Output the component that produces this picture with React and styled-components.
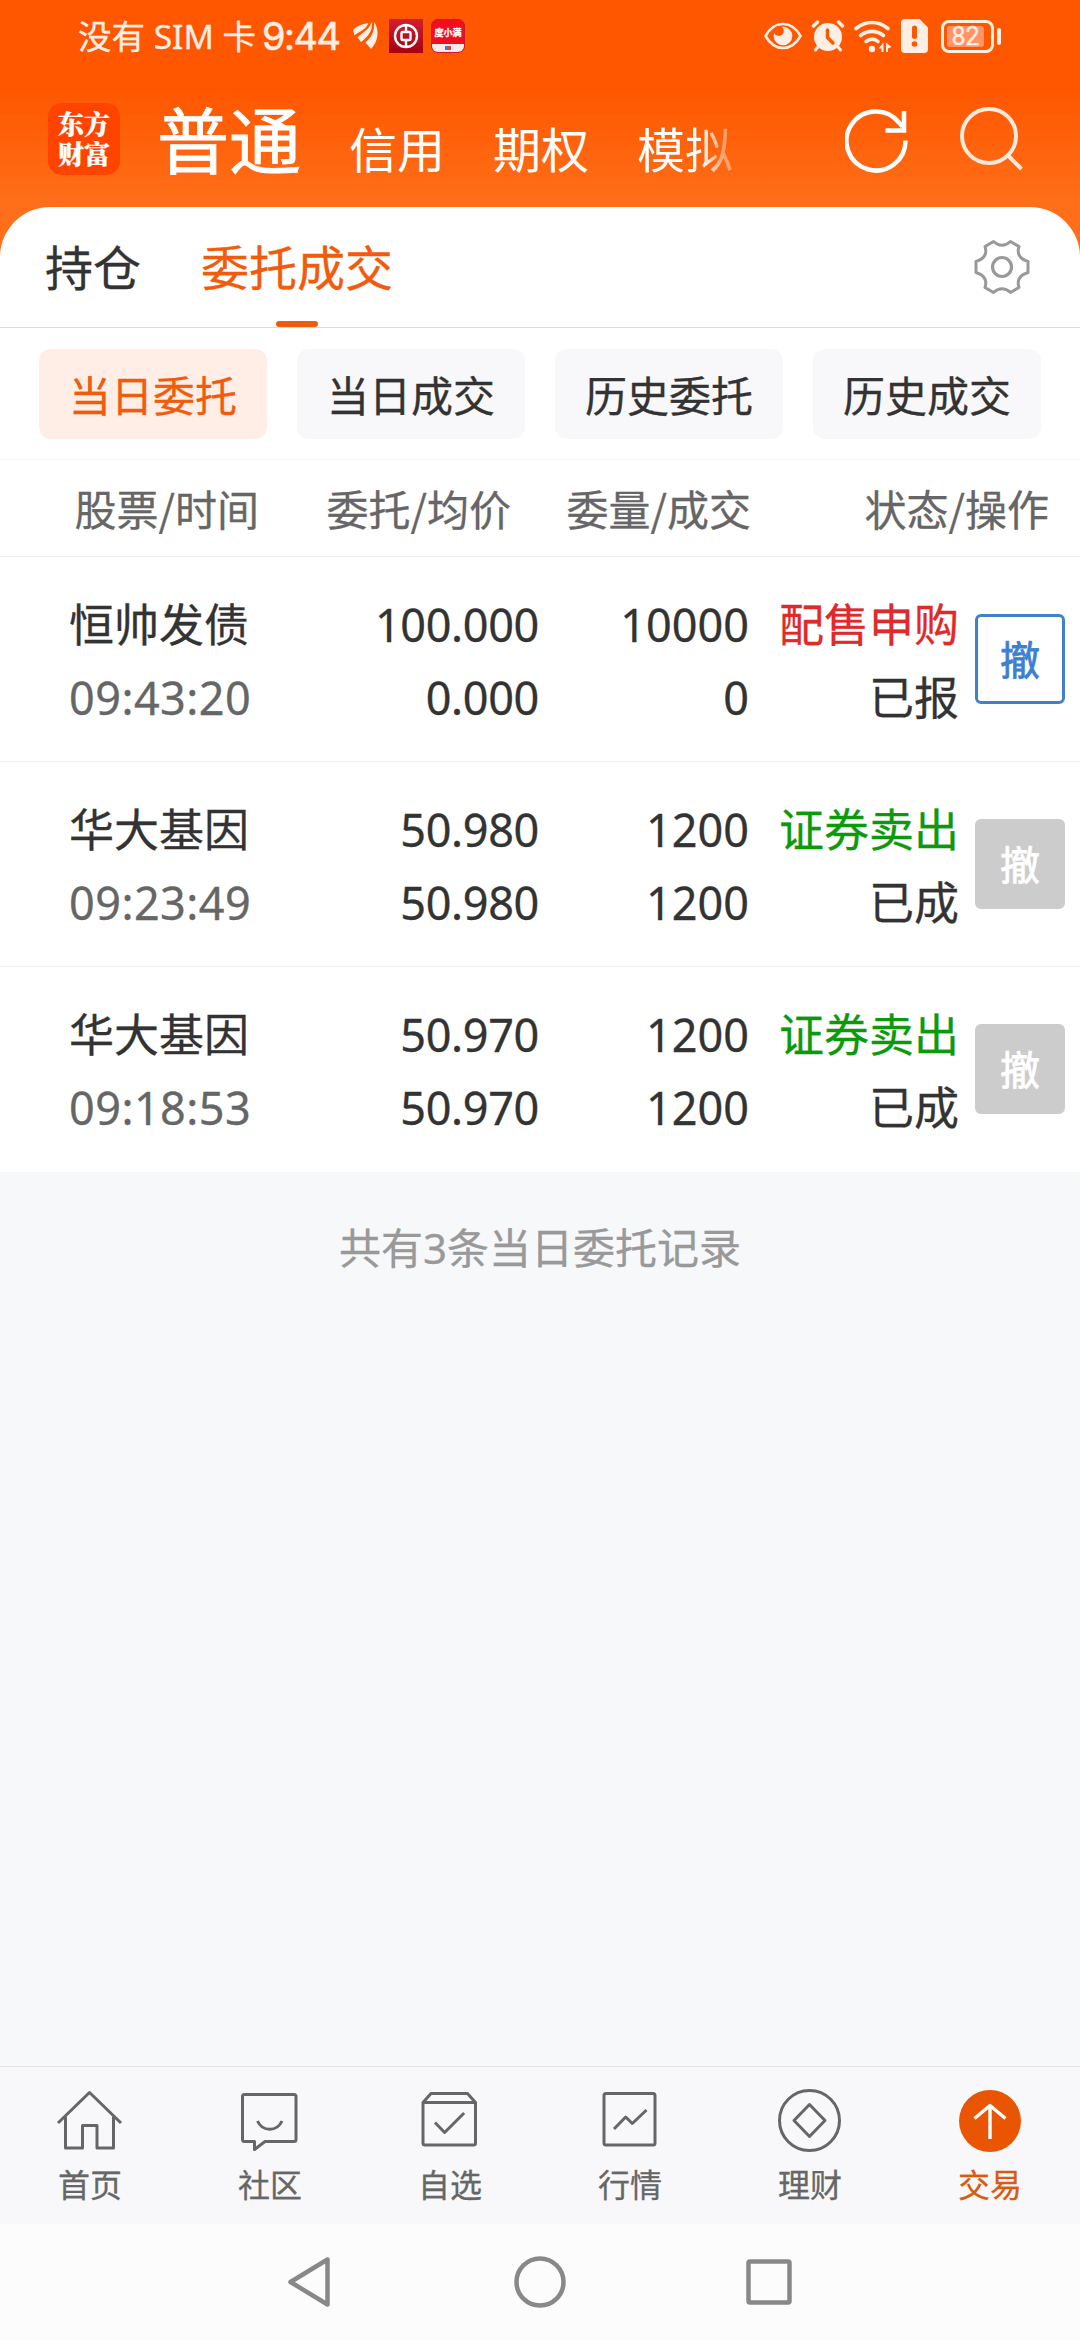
import React from "react"
import styled, { createGlobalStyle } from "styled-components"

const GlobalStyle = createGlobalStyle`
  * {
    box-sizing: border-box;
  }
  body {
    margin: 0;
    background: #f7f8fa;
    color: #333;
    font-family: "Noto Sans", "Noto Sans CJK SC", sans-serif;
  }
`

const ORDERS = [
  {
    name: "恒帅发债",
    time: "09:43:20",
    price: "100.000",
    average: "0.000",
    amount: "10000",
    filled: "0",
    side: "配售申购",
    color: "#e02a2a",
    status: "已报",
    cancelable: true,
  },
  {
    name: "华大基因",
    time: "09:23:49",
    price: "50.980",
    average: "50.980",
    amount: "1200",
    filled: "1200",
    side: "证券卖出",
    color: "#0c9a0c",
    status: "已成",
  },
  {
    name: "华大基因",
    time: "09:18:53",
    price: "50.970",
    average: "50.970",
    amount: "1200",
    filled: "1200",
    side: "证券卖出",
    color: "#0c9a0c",
    status: "已成",
  },
]

const FILTERS = ["当日委托", "当日成交", "历史委托", "历史成交"]

// ---- status bar icons ----

const LeafIcon = () => (
  <svg width="28" height="30" viewBox="0 0 28 30" fill="currentColor">
    <path d="M15.500 2C9 3 3 5.500 0 9l1.500 5.500C6 10 12 10 15.500 2Z" />
    <path d="M18.500.800C17 8 10 11 4.500 16.500L8 21C15 16 20.500 9 18.500.800Z" />
    <path d="M21 .800C22 9 19 16 12.500 21.500L18 28C25 21 27 9 21 .800Z" />
  </svg>
)

const BankIcon = () => (
  <svg width="34" height="34" viewBox="0 0 34 34">
    <defs>
      <linearGradient id="bank" x1="0" y1="0" x2="0" y2="1">
        <stop offset="0" stopColor="#d02030" />
        <stop offset="1" stopColor="#a80010" />
      </linearGradient>
    </defs>
    <rect width="34" height="34" fill="url(#bank)" />
    <g fill="none" stroke="#fff" strokeWidth="2.4">
      <circle cx="17" cy="17" r="11" />
      <rect x="12.5" y="13" width="9" height="8" rx="1" />
      <path d="M17 6v7M17 21v7" />
    </g>
  </svg>
)

const EyeIcon = () => (
  <svg width="38" height="28" viewBox="0 0 38 28">
    <path
      d="M1.500 14C6 6 12 2 19 2s13 4 17.500 12C32 22 26 26 19 26S6 22 1.500 14Z"
      fill="none"
      stroke="currentColor"
      strokeWidth="2.6"
    />
    <circle cx="19" cy="14" r="9.300" fill="currentColor" />
    <circle cx="14.800" cy="9" r="5" fill="#ff5600" />
  </svg>
)

const AlarmIcon = () => (
  <svg width="34" height="32" viewBox="-1 0 34 32">
    <circle cx="16" cy="17" r="14" fill="currentColor" />
    <g fill="none" stroke="currentColor" strokeLinecap="round">
      <path d="M1.500 6l4-4M30.500 6l-4-4" strokeWidth="3.400" />
      <path d="M6 27l-2.500 3M26 27l2.500 3" strokeWidth="3" />
    </g>
    <path
      d="M15.500 10v7.500l5.500 5.500"
      fill="none"
      stroke="#ff5600"
      strokeWidth="3.400"
      strokeLinecap="round"
    />
  </svg>
)

const WifiIcon = () => (
  <svg width="38" height="33" viewBox="0 0 38 33">
    <g
      fill="none"
      stroke="currentColor"
      strokeWidth="3.600"
      strokeLinecap="round"
    >
      <path d="M2 8.500C11.500.500 24.500.500 34 8.500" />
      <path d="M6.500 15.500c7-5.500 16-5.500 23 0" />
      <path d="M12 21.500c4-3 8.500-3 12 0" />
    </g>
    <circle cx="18" cy="29" r="3.200" fill="currentColor" />
    <path
      d="M29.500 22.500v9.500h-2v-3.400h-3zM32 22.500l5.500 4.500-3.500 1.500v3.500H32z"
      fill="currentColor"
    />
  </svg>
)

const SimIcon = () => (
  <svg width="27" height="34" viewBox="0 0 27 34">
    <path
      d="M4 0h14.500L27 8.500V30a4 4 0 0 1-4 4H4a4 4 0 0 1-4-4V4a4 4 0 0 1 4-4Z"
      fill="currentColor"
    />
    <path
      d="M13.500 9v8.500"
      stroke="#ff5600"
      strokeWidth="5"
      strokeLinecap="round"
    />
    <circle cx="13.500" cy="25" r="2.800" fill="#ff5600" />
  </svg>
)

// ---- toolbar icons ----

const RefreshIcon = () => (
  <svg
    width="64"
    height="66"
    viewBox="0 0 64 66"
    fill="none"
    stroke="#fff"
    strokeWidth="4.500"
  >
    <path d="M60.500 33.500A29.500 29.500 0 1 1 54 15.500l3.500 4" />
    <path d="M59 4v19.500H40.500" />
  </svg>
)

const SearchIcon = () => (
  <svg
    width="64"
    height="66"
    viewBox="0 0 64 66"
    fill="none"
    stroke="#ffe9dc"
    strokeWidth="4"
  >
    <circle cx="30" cy="29" r="27" />
    <path d="M49 48.500l13.500 13.500" />
  </svg>
)

const GearIcon = () => (
  <svg
    width="56"
    height="56"
    viewBox="-28 -28 56 56"
    fill="none"
    stroke="#999"
  >
    <path
      strokeWidth="3"
      strokeLinejoin="round"
      d="M-8.500-25.500Q0-18 8.500-25.500L17-20.500C14.500-13 18-8 26-5.500V5.500C18 8 14.500 13 17 20.500L8.500 25.500Q0 18-8.500 25.500L-17 20.500C-14.500 13-18 8-26 5.500V-5.500C-18-8-14.500-13-17-20.500Z"
    />
    <circle r="9.500" strokeWidth="3.200" />
  </svg>
)

// ---- bottom tab icons ----

const HomeIcon = () => (
  <>
    <path d="M-1 34L30.500 3.500 62 34" />
    <path d="M6.500 28v31h17V36.500H38V59h16.500V28" />
  </>
)

const ChatIcon = () => (
  <>
    <path d="M5.500 5.500h49.500q2 0 2 2v43q0 2-2 2H26l-10.500 8v-8h-10q-2 0-2-2v-43q0-2 2-2Z" />
    <path d="M18.500 32c5 11 19.500 11 24.500 0" />
  </>
)

const PickIcon = () => (
  <>
    <path d="M4 13.500l8-9h36.500l8 9V54q0 2-2 2H6q-2 0-2-2ZM4 13.500h52.500" />
    <path d="M16 33.500l9.600 10 19.500-19.500" />
  </>
)

const MarketIcon = () => (
  <>
    <rect x="5" y="4.5" width="51" height="51.5" rx="2" />
    <path d="M15 40l11.700-12 6.600 6.500L47.500 21" />
  </>
)

const WealthIcon = () => (
  <>
    <circle cx="30.500" cy="31.500" r="30" />
    <path d="M30.500 15.500L46 31.500 30.500 47.500 15 31.500Z" />
  </>
)

const TradeIcon = () => (
  <>
    <circle cx="31" cy="32" r="31" fill="#ea5504" stroke="none" />
    <path d="M31 50V17M15.500 29.500L31 16.500l15.500 13" stroke="#fff" strokeWidth="3.400" />
  </>
)

const TABS = [
  { label: "首页", Icon: HomeIcon },
  { label: "社区", Icon: ChatIcon },
  { label: "自选", Icon: PickIcon },
  { label: "行情", Icon: MarketIcon },
  { label: "理财", Icon: WealthIcon },
  { label: "交易", Icon: TradeIcon, active: true },
]

const App = () => (
  <Screen>
    <GlobalStyle />
    <Top>
      <StatusBar>
        <Carrier>没有 SIM 卡</Carrier>
        <Clock>9:44</Clock>
        <Notices>
          <LeafIcon />
          <BankIcon />
          <DuBadge>
            <DuName>度小满</DuName>
            <DuFoot />
          </DuBadge>
        </Notices>
        <System>
          <EyeIcon />
          <AlarmIcon />
          <WifiIcon />
          <SimIcon />
          <Battery>
            <Charge>82</Charge>
          </Battery>
        </System>
      </StatusBar>
      <Toolbar>
        <Logo>
          东方
          <br />
          财富
        </Logo>
        <Accounts>
          <Account $active>普通</Account>
          <Account>信用</Account>
          <Account>期权</Account>
          <FadedAccount>模拟</FadedAccount>
        </Accounts>
        <Actions>
          <RefreshIcon />
          <SearchIcon />
        </Actions>
      </Toolbar>
    </Top>

    <Sheet>
      <SheetTabs>
        <SheetTab>持仓</SheetTab>
        <SheetTab $active>委托成交</SheetTab>
        <GearSlot>
          <GearIcon />
        </GearSlot>
      </SheetTabs>
      <Filters>
        {FILTERS.map((label, i) => (
          <Filter key={label} $active={i === 0}>
            {label}
          </Filter>
        ))}
      </Filters>
      <TableHead>
        <HeadCell>股票/时间</HeadCell>
        <HeadCell>委托/均价</HeadCell>
        <HeadCell>委量/成交</HeadCell>
        <HeadCell>状态/操作</HeadCell>
      </TableHead>
      {ORDERS.map((order) => (
        <Order key={order.time}>
          <Cell $align="left">
            <Line>{order.name}</Line>
            <Line $color="#666" $spacing="0.45px">
              {order.time}
            </Line>
          </Cell>
          <Cell>
            <Line $spacing="-0.35px">{order.price}</Line>
            <Line $spacing="-0.35px">{order.average}</Line>
          </Cell>
          <Cell>
            <Line>{order.amount}</Line>
            <Line>{order.filled}</Line>
          </Cell>
          <Cell>
            <Line $color={order.color}>{order.side}</Line>
            <Line>{order.status}</Line>
          </Cell>
          <CancelButton $enabled={order.cancelable}>撤</CancelButton>
        </Order>
      ))}
    </Sheet>

    <Summary>共有3条当日委托记录</Summary>

    <TabBar>
      {TABS.map(({ label, Icon, active }) => (
        <Tab key={label} $active={active}>
          <svg
            width="62"
            height="64"
            viewBox="0 0 62 64"
            fill="none"
            stroke="currentColor"
            strokeWidth="3"
            strokeLinejoin="round"
            overflow="visible"
          >
            <Icon />
          </svg>
          {label}
        </Tab>
      ))}
    </TabBar>

    <SystemNav>
      <svg width="46" height="52" viewBox="0 0 46 52">
        <path d="M39.500 3.500v45L2.500 26Z" />
      </svg>
      <svg width="52" height="52" viewBox="0 0 52 52">
        <circle cx="26" cy="26" r="23.500" />
      </svg>
      <svg width="46" height="46" viewBox="0 0 46 46">
        <rect x="2.500" y="2.500" width="41" height="41" rx="1.500" />
      </svg>
    </SystemNav>
  </Screen>
)

const Screen = styled.div`
  display: flex;
  flex-direction: column;
  width: 1080px;
  height: 2340px;
  overflow: hidden;
  background: #f7f8fa;
  -webkit-text-stroke: 0.3px currentColor;
`

const Top = styled.header`
  height: 257px;
  margin-bottom: -50px;
  background: linear-gradient(#ff5600 86px, #ff6e18 200px);
  color: #ffeee4;
`

const StatusBar = styled.div`
  display: flex;
  align-items: center;
  height: 72px;
  padding: 0 79px 0 78px;
`

const Carrier = styled.div`
  width: 184px;
  font-size: 33.5px;
  line-height: 46px;
  white-space: nowrap;
`

const Clock = styled.div`
  width: 82px;
  font-family: Inter, sans-serif;
  font-size: 38px;
  letter-spacing: -1.5px;
  white-space: nowrap;
  -webkit-text-stroke: 0.6px currentColor;
`

const Notices = styled.div`
  display: flex;
  align-items: center;
  gap: 8px;
  margin-left: 9px;
`

const DuBadge = styled.div`
  display: flex;
  flex-direction: column;
  justify-content: space-between;
  align-items: center;
  width: 34px;
  height: 34px;
  border: 1px solid #d01525;
  border-radius: 7px;
  background: #f40d1e;
  overflow: hidden;
`

const DuName = styled.div`
  margin-top: 6px;
  font: 700 9px/14px "Noto Sans CJK SC", sans-serif;
  color: #fff;
  white-space: nowrap;
`

const DuFoot = styled.div`
  width: 34px;
  height: 8px;
  background: linear-gradient(90deg, #3a7fd0 50%, #e0404a 50%) center / 6px 4px
    no-repeat #ffe9ea;
`

const System = styled.div`
  display: flex;
  align-items: center;
  gap: 9px;
  margin-left: auto;
`

const Battery = styled.div`
  position: relative;
  width: 53px;
  height: 33px;
  margin: 0 7px 0 4px;
  padding: 3px;
  border: 3px solid currentColor;
  border-radius: 8px;

  &::after {
    content: "";
    position: absolute;
    top: 5px;
    right: -10px;
    width: 4px;
    height: 17px;
    border-radius: 2px;
    background: currentColor;
  }
`

const Charge = styled.div`
  width: 37px;
  height: 21px;
  border-radius: 3px;
  background: #ff9566;
  font: 400 25px/22px Roboto, sans-serif;
  text-align: center;
`

const Toolbar = styled.div`
  display: flex;
  padding: 0 57px 0 48px;
`

const Logo = styled.div`
  width: 72px;
  height: 72px;
  margin-top: 31px;
  padding-top: 5px;
  border-radius: 14px;
  background: #ff4400;
  color: #fff;
  font: 900 26px/30px "Noto Serif CJK SC", "Noto Sans CJK SC", serif;
  text-align: center;
`

const Accounts = styled.nav`
  display: flex;
  align-items: baseline;
  gap: 48px;
  height: 130px;
  margin-left: 37px;
`

const Account = styled.div`
  font-family: "Noto Sans CJK SC", sans-serif;
  font-size: ${(props) => (props.$active ? "72px" : "48px")};
  line-height: 130px;
  color: #fff;
  -webkit-text-stroke: ${(props) => (props.$active ? "0.8px #fff" : "0")};
`

const FadedAccount = styled(Account)`
  background: linear-gradient(90deg, #fff 66%, rgba(255, 255, 255, 0.4) 90%);
  background-clip: text;
  color: transparent;
`

const Actions = styled.div`
  display: flex;
  gap: 50px;
  margin: 35px 0 0 auto;
`

const Sheet = styled.main`
  border-radius: 50px 50px 0 0;
  background: #fff;
`

const SheetTabs = styled.nav`
  display: flex;
  height: 121px;
  padding: 0 50px 0 45px;
  border-bottom: 1px solid #dcdcdc;
`

const SheetTab = styled.div`
  position: relative;
  margin-right: 60px;
  font-size: 48px;
  line-height: 122px;
  color: ${(props) => (props.$active ? "#f25a0c" : "#333")};

  &::after {
    content: "";
    display: ${(props) => (props.$active ? "block" : "none")};
    position: absolute;
    bottom: 0;
    left: 50%;
    width: 42px;
    height: 6px;
    margin-left: -21px;
    border-radius: 3px;
    background: #f25a0c;
  }
`

const GearSlot = styled.div`
  margin: 32px 0 0 auto;
`

const Filters = styled.div`
  display: flex;
  gap: 30px;
  height: 132px;
  padding: 21px 39px;
  border-bottom: 1px solid #f5f5f5;
`

const Filter = styled.div`
  flex: 1;
  height: 90px;
  border-radius: 12px;
  background: ${(props) => (props.$active ? "#ffeee6" : "#f8f8fa")};
  color: ${(props) => (props.$active ? "#f25a0c" : "#333")};
  font-size: 42px;
  line-height: 94px;
  text-align: center;
`

const TableHead = styled.div`
  display: grid;
  grid-template-columns: 259px 252px 240px 298px;
  height: 97px;
  border-bottom: 1px solid #eee;
`

const HeadCell = styled.div`
  font-family: "Noto Sans CJK SC", sans-serif;
  font-size: 42px;
  line-height: 96px;
  text-align: right;
  color: #666;
`

const Order = styled.div`
  display: grid;
  grid-template-columns: 251px 219px 210px 210px 90px;
  height: 205px;
  padding: 31px 0 0 69px;
  border-bottom: 1px solid #eee;

  &:last-child {
    border-bottom-color: #fff;
  }
`

const Cell = styled.div`
  text-align: ${(props) => props.$align || "right"};
`

const Line = styled.div`
  font-size: 45px;
  line-height: 73px;
  letter-spacing: ${(props) => props.$spacing || "0"};
  white-space: nowrap;
  color: ${(props) => props.$color || "#333"};
  -webkit-text-stroke: 0.3px currentColor;
`

const CancelButton = styled.div`
  width: 90px;
  height: 90px;
  margin: 26px 0 0 16px;
  border: 3px solid ${(props) => (props.$enabled ? "#4080cc" : "#ccc")};
  border-radius: 6px;
  background: ${(props) => (props.$enabled ? "#fff" : "#ccc")};
  color: ${(props) => (props.$enabled ? "#3c80d2" : "#fff")};
  font-size: 40px;
  line-height: 86px;
  text-align: center;
  -webkit-text-stroke: 0.8px currentColor;
`

const Summary = styled.div`
  font-size: 42px;
  line-height: 60px;
  padding-top: 46px;
  text-align: center;
  color: #999;
`

const TabBar = styled.nav`
  display: grid;
  grid-template-columns: repeat(6, 1fr);
  height: 158px;
  margin-top: auto;
  border-top: 1px solid #e2e2e4;
  background: #f8f8fa;
`

const Tab = styled.div`
  display: flex;
  flex-direction: column;
  align-items: center;
  gap: 10px;
  padding-top: 22px;
  color: ${(props) => (props.$active ? "#d95a10" : "#666")};
  font-size: 32px;
  line-height: 44px;
`

const SystemNav = styled.div`
  display: flex;
  align-items: center;
  justify-content: center;
  gap: 180px;
  height: 116px;
  background: #fcfcfc;

  svg {
    fill: none;
    stroke: #888;
    stroke-width: 4.5;
    stroke-linejoin: round;
  }
`

export default App
